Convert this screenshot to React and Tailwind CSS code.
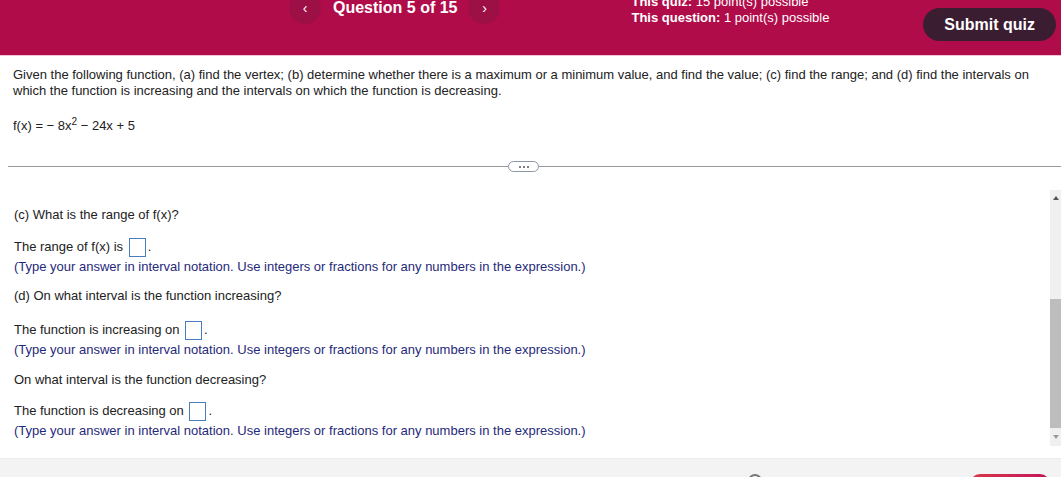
import React from 'react'

function AnswerBox() {
  return <span className="mx-[2px] inline-block h-[19px] w-[17px] border border-[#4a7cc0] bg-white align-middle" />
}

function Hint() {
  return (
    <div className="text-[#1f2a7a]">
      (Type your answer in interval notation. Use integers or fractions for any numbers in the expression.)
    </div>
  )
}

export default function App() {
  return (
    <div className="relative h-[477px] w-[1061px] overflow-hidden bg-white font-['Liberation_Sans',Arial,sans-serif] text-[13px] text-[#222]">
      <header className="relative flex h-[56px] items-start border-b border-[#f2c4d5] bg-[#b10c4a] text-white">
        <div className="ml-[289px] mt-[-8px] flex items-center">
          <button className="flex h-[32px] w-[32px] items-center justify-center rounded-full bg-[#9d1046] text-[14px] leading-none">‹</button>
          <div className="ml-[12px] text-[16px] font-bold leading-none">Question 5 of 15</div>
          <button className="ml-[11px] flex h-[32px] w-[32px] items-center justify-center rounded-full bg-[#9d1046] text-[14px] leading-none">›</button>
        </div>
        <div className="ml-[131px] mt-[-6px] text-[13px] leading-[16px]">
          <div>
            <span className="font-bold">This quiz:</span> 15 point(s) possible
          </div>
          <div>
            <span className="font-bold">This question:</span> 1 point(s) possible
          </div>
        </div>
        <button className="ml-auto mr-[5px] mt-[8px] h-[33px] rounded-full bg-[#3b1d31] px-[21px] text-[16px] font-bold">
          Submit quiz
        </button>
      </header>

      <section className="px-[13px] pt-[11px] leading-[16px]">
        <p>
          Given the following function, (a) find the vertex; (b) determine whether there is a maximum or a minimum value, and find the value; (c) find the range; and (d) find the intervals on which the function is increasing and the intervals on which the function is decreasing.
        </p>
        <p className="mt-[19px]">
          f(x) = − 8x<sup className="text-[10px]">2</sup> − 24x + 5
        </p>
      </section>

      <div className="relative ml-[8px] mt-[32px] h-px bg-[#9a9a9a]">
        <div className="absolute left-[500px] top-[-5px] flex h-[11px] w-[31px] items-center justify-center gap-[2px] rounded-full border border-[#8d97a8] bg-white">
          <span className="h-[2px] w-[2px] rounded-full bg-[#556]" />
          <span className="h-[2px] w-[2px] rounded-full bg-[#556]" />
          <span className="h-[2px] w-[2px] rounded-full bg-[#556]" />
        </div>
      </div>

      <div className="mt-[23px] flex h-[256px]">
        <div className="flex-1 px-[14px] pt-[17px] leading-[16px]">
          <div>(c) What is the range of f(x)?</div>
          <div className="mt-[12px] leading-[24px]">
            The range of f(x) is <AnswerBox />.
          </div>
          <Hint />
          <div className="mt-[13px]">(d) On what interval is the function increasing?</div>
          <div className="mt-[14px] leading-[24px]">
            The function is increasing on <AnswerBox />.
          </div>
          <Hint />
          <div className="mt-[14px]">On what interval is the function decreasing?</div>
          <div className="mt-[11px] leading-[24px]">
            The function is decreasing on <AnswerBox />.
          </div>
          <Hint />
        </div>
        <div className="flex w-[11px] flex-col bg-[#f0f0f0]">
          <div className="flex h-[16px] items-center justify-center">
            <span className="h-0 w-0 border-x-[3px] border-b-[4px] border-x-transparent border-b-[#555]" />
          </div>
          <div className="mt-[93px] h-[129px] bg-[#bdbdbd]" />
          <div className="flex flex-1 items-center justify-center">
            <span className="h-0 w-0 border-x-[3px] border-t-[4px] border-x-transparent border-t-[#999]" />
          </div>
        </div>
      </div>

      <footer className="relative mt-[12px] h-[19px] border-t border-[#ececec] bg-[#f3f3f3]">
        <div className="absolute left-[748px] top-[15px] h-[14px] w-[14px] rounded-full border-2 border-[#777] bg-[#f3f3f3]" />
        <div className="absolute left-[970px] top-[15px] h-[20px] w-[80px] rounded-full bg-gradient-to-r from-[#d8364a] to-[#c3105a]" />
      </footer>
    </div>
  )
}
